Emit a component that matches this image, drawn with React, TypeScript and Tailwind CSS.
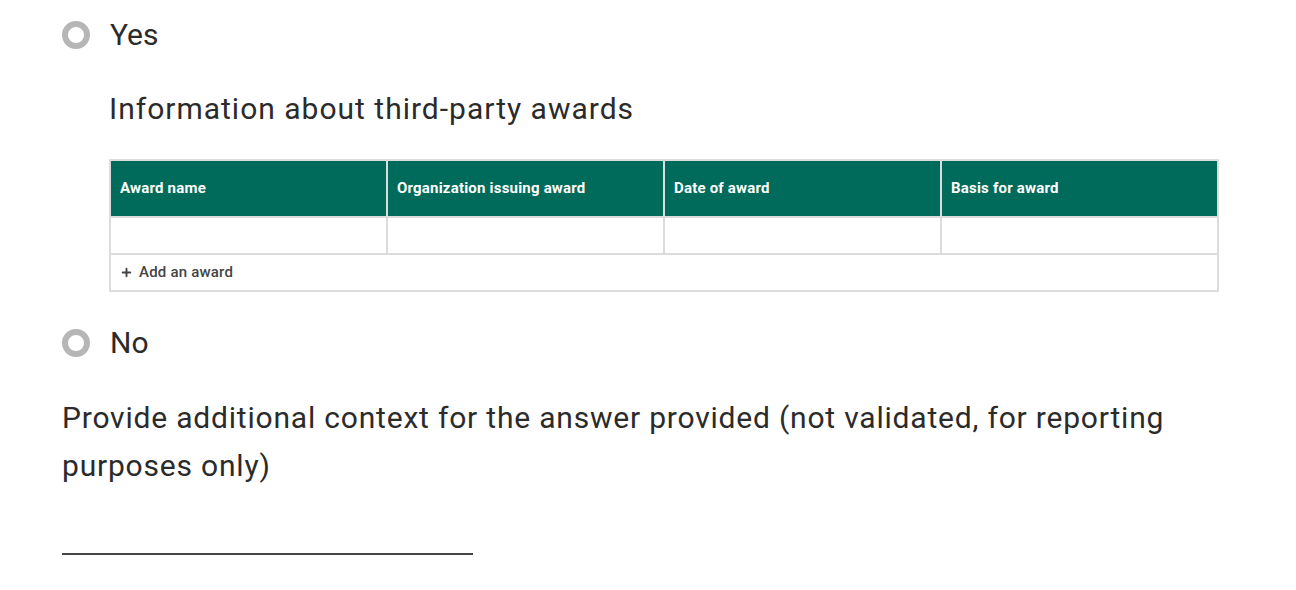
import { Plus } from 'lucide-react';

const COLUMNS = ['Award name', 'Organization issuing award', 'Date of award', 'Basis for award'];

function Radio({ label }: { label: string }) {
  return (
    <label className="flex items-center gap-[20px] h-[40px]">
      <span className="w-[28px] h-[28px] rounded-full border-[6px] border-[#b6b6b6] bg-white shrink-0" />
      <span className="text-[30px] text-[#2b2b2b] leading-none">{label}</span>
    </label>
  );
}

export default function App() {
  return (
    <div className="bg-white w-[1296px] h-[590px] pl-[62px] pt-[15px] font-['Roboto',sans-serif] text-[#333]">
      <Radio label="Yes" />

      <div className="pl-[47px] pt-[36px] w-[1157px]">
        <h3 className="text-[30px] leading-[36px] text-[#2b2b2b] tracking-[1px]">Information about third-party awards</h3>

        <table className="mt-[32px] w-[1110px] border-collapse border-2 border-[#dcdcdc] table-fixed">
          <thead>
            <tr className="bg-[#006b5a] h-[57px]">
              {COLUMNS.map(c => (
                <th key={c} className="border-2 border-[#dcdcdc] px-[9px] text-left text-[15px] font-bold text-white tracking-[0.2px]">
                  {c}
                </th>
              ))}
            </tr>
          </thead>
          <tbody>
            <tr className="h-[37px]">
              {COLUMNS.map(c => (
                <td key={c} className="border-2 border-[#dcdcdc]" />
              ))}
            </tr>
            <tr className="h-[37px]">
              <td colSpan={4} className="border-2 border-[#dcdcdc] px-[9px]">
                <span className="flex items-center gap-[6px] text-[15px] font-medium text-[#444] tracking-[0.2px]">
                  <Plus size={13} strokeWidth={3.5} />
                  Add an award
                </span>
              </td>
            </tr>
          </tbody>
        </table>
      </div>

      <div className="mt-[31px]">
        <Radio label="No" />
      </div>

      <p className="mt-[31px] w-[1157px] text-[30px] leading-[48px] text-[#2b2b2b] tracking-[0.8px]">
        Provide additional context for the answer provided (not validated, for reporting purposes only)
      </p>

      <div className="mt-[63px] w-[411px] border-b-2 border-[#444]" />
    </div>
  );
}
